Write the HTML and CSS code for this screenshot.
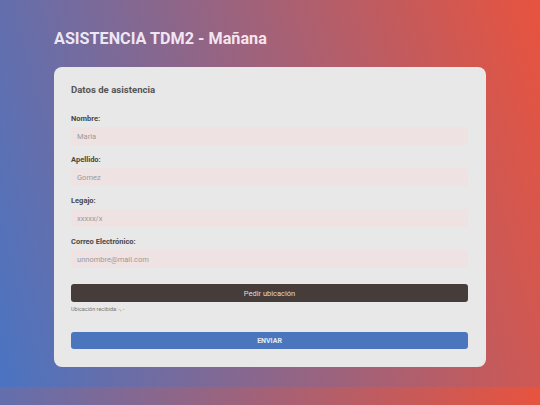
FILE: index.html
```html
<!DOCTYPE html>
<html lang="es">
<head>
<meta charset="utf-8">
<title>ASISTENCIA TDM2 - Mañana</title>
<link rel="stylesheet" href="styles.css">
</head>
<body>
<h1 class="title">ASISTENCIA TDM2 - Mañana</h1>
<form class="card">
  <h2 class="card-title">Datos de asistencia</h2>
  <div class="field">
    <label class="label" for="nombre">Nombre:</label>
    <input class="input" id="nombre" type="text" placeholder="Maria">
  </div>
  <div class="field">
    <label class="label" for="apellido">Apellido:</label>
    <input class="input" id="apellido" type="text" placeholder="Gomez">
  </div>
  <div class="field">
    <label class="label" for="legajo">Legajo:</label>
    <input class="input" id="legajo" type="text" placeholder="xxxxx/x">
  </div>
  <div class="field">
    <label class="label" for="correo">Correo Electrónico:</label>
    <input class="input" id="correo" type="email" placeholder="unnombre@mail.com">
  </div>
  <button class="btn btn-dark" type="button">Pedir ubicación</button>
  <p class="status">Ubicación recibida: -, -</p>
  <button class="btn btn-blue" type="submit">ENVIAR</button>
</form>
</body>
</html>
```

FILE: styles.css
```css
html {
  background: linear-gradient(75deg, #4a74c2 0%, #e8533e 100%);
}
body {
  margin: 0;
  padding: 28px 54px 20px 54px;
  font-family: Roboto, "Liberation Sans", sans-serif;
}
.title {
  margin: 0 0 18px 0;
  font-size: 16.2px;
  line-height: 21px;
  font-weight: 700;
  color: rgba(255, 248, 255, 0.9);
}
.card {
  background: #e8e8e8;
  border-radius: 8px;
  padding: 17px 18px 18px 17px;
  display: flex;
  flex-direction: column;
}
.card-title {
  margin: 0 0 18px 0;
  font-size: 9.6px;
  line-height: 12px;
  font-weight: 700;
  color: #555;
}
.field {
  display: flex;
  flex-direction: column;
  gap: 3px;
  margin-bottom: 10px;
}
.label {
  font-size: 7.5px;
  line-height: 10px;
  font-weight: 700;
  color: #474747;
}
.input {
  box-sizing: border-box;
  height: 18px;
  margin: 0;
  border: none;
  border-radius: 3px;
  background: #efe2e2;
  padding: 0 6px;
  font-family: inherit;
  font-size: 7.5px;
  color: #333;
  outline: none;
}
.input::placeholder {
  color: #9a9a9a;
}
.btn {
  box-sizing: border-box;
  height: 18px;
  margin: 0;
  border: none;
  border-radius: 3px;
  font-family: inherit;
  padding: 0;
}
.btn-dark {
  margin-top: 6px;
  background: #463c3a;
  color: #dddddd;
  font-size: 7.5px;
}
.status {
  margin: 4px 0 19px 0;
  font-size: 5.5px;
  line-height: 7px;
  color: #777;
}
.btn-blue {
  height: 17px;
  background: #4b76bd;
  color: #e4e9f2;
  font-size: 7px;
  font-weight: 700;
}
```
